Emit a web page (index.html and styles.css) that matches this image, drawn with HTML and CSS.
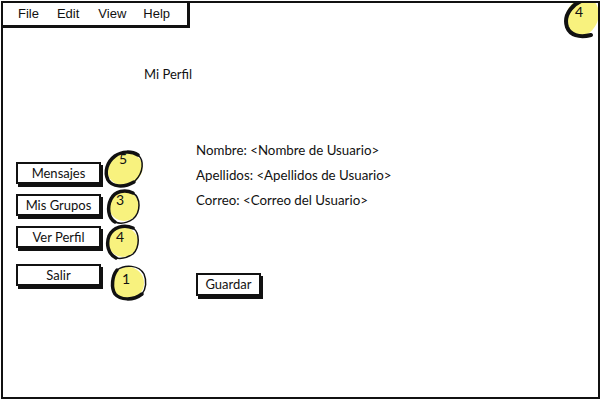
FILE: index.html
```html
<!DOCTYPE html>
<html>
<head>
<meta charset="utf-8">
<link rel="stylesheet" href="styles.css">
</head>
<body>
<div class="frame">
  <div class="menubar">
    <span class="menu-item">File</span>
    <span class="menu-item">Edit</span>
    <span class="menu-item">View</span>
    <span class="menu-item">Help</span>
  </div>
  <div class="corner-badge">
    <svg class="badge-svg" viewBox="0 0 40 44" width="40" height="44">
      <ellipse cx="21" cy="20" rx="16" ry="20" fill="#f8f27e" transform="rotate(25 21 20)"/>
      <path d="M28 2 C12 4 2 18 6 30 C9 38 18 41 30 38" fill="none" stroke="#111" stroke-width="4" stroke-linecap="round"/>
    </svg>
    <span class="badge-num">4</span>
  </div>
  <h1 class="title">Mi Perfil</h1>
  <div class="main">
    <div class="nav">
      <div class="nav-row">
        <div class="btn btn-nav">Mensajes</div>
        <div class="badge b5">
          <svg class="badge-svg" viewBox="0 0 44 40" width="44" height="40">
            <ellipse cx="23" cy="19" rx="18" ry="16" fill="#f8f27e" transform="rotate(-25 23 19)"/>
            <path d="M36 5 C30 1 20 1 13 6 C5 12 2 22 6 30 C10 37 22 38 32 32" fill="none" stroke="#111" stroke-width="3.5" stroke-linecap="round"/>
            <path d="M36 5 C42 10 42 22 33 31" fill="none" stroke="#111" stroke-width="1.5"/>
          </svg>
          <span class="badge-num">5</span>
        </div>
      </div>
      <div class="nav-row">
        <div class="btn btn-nav">Mis Grupos</div>
        <div class="badge b3">
          <svg class="badge-svg" viewBox="0 0 36 38" width="36" height="38">
            <ellipse cx="19" cy="18" rx="15" ry="15" fill="#f8f27e"/>
            <path d="M28 5 C20 1 10 3 6 11 C2 19 3 30 10 34" fill="none" stroke="#111" stroke-width="3.5" stroke-linecap="round"/>
            <path d="M28 5 C36 10 36 24 28 31 C22 35 15 36 10 34" fill="none" stroke="#111" stroke-width="1.5"/>
          </svg>
          <span class="badge-num">3</span>
        </div>
      </div>
      <div class="nav-row">
        <div class="btn btn-nav">Ver Perfil</div>
        <div class="badge b4">
          <svg class="badge-svg" viewBox="0 0 36 38" width="36" height="38">
            <ellipse cx="19" cy="19" rx="15" ry="15" fill="#f8f27e"/>
            <path d="M29 5 C20 1 9 4 5 13 C2 21 4 31 12 35" fill="none" stroke="#111" stroke-width="3.5" stroke-linecap="round"/>
            <path d="M29 5 C36 10 36 24 29 31 C23 35 17 36 12 35" fill="none" stroke="#111" stroke-width="1.5"/>
          </svg>
          <span class="badge-num">4</span>
        </div>
      </div>
      <div class="nav-row">
        <div class="btn btn-nav">Salir</div>
        <div class="badge b1">
          <svg class="badge-svg" viewBox="0 0 40 38" width="40" height="38">
            <ellipse cx="19" cy="19" rx="16" ry="16" fill="#f8f27e"/>
            <path d="M8 6 C3 12 2 24 6 30 C11 36 24 37 33 30" fill="none" stroke="#111" stroke-width="3.5" stroke-linecap="round"/>
            <path d="M8 6 C16 0 30 1 35 10 C38 17 37 25 33 30" fill="none" stroke="#111" stroke-width="1.5"/>
          </svg>
          <span class="badge-num">1</span>
        </div>
      </div>
    </div>
    <div class="profile">
      <p class="field">Nombre: &lt;Nombre de Usuario&gt;</p>
      <p class="field">Apellidos: &lt;Apellidos de Usuario&gt;</p>
      <p class="field">Correo: &lt;Correo del Usuario&gt;</p>
      <div class="btn btn-save">Guardar</div>
    </div>
  </div>
</div>
</body>
</html>
```

FILE: styles.css
```css
* { box-sizing: border-box; }
body {
  margin: 0;
  background: #fff;
  font-family: Lato, "Open Sans", sans-serif;
  color: #111;
}
.frame {
  position: relative;
  width: 599px;
  height: 398px;
  margin: 1px 0 0 1px;
  border: 2px solid #111;
  overflow: hidden;
}
.menubar {
  display: flex;
  align-items: center;
  width: 189px;
  height: 27px;
  margin: -3px 0 0 -3px;
  padding-left: 16px;
  background: #fff;
  border: 2px solid #111;
  box-shadow: 1px 1px 0 #111;
  font-family: "Liberation Sans", Arial, sans-serif;
  font-size: 13px;
  position: relative;
  z-index: 2;
}
.menu-item { margin-right: 18px; }
.menu-item:nth-child(2) { margin-right: 19px; }
.menu-item:nth-child(3) { margin-right: 17px; }
.corner-badge {
  position: absolute;
  right: -3px;
  top: -6px;
  width: 40px;
  height: 44px;
}
.corner-badge .badge-num {
  left: 14px;
  top: 8px;
}
.badge-svg { display: block; }
.badge-num {
  position: absolute;
  font-size: 14px;
  line-height: 14px;
}
.title {
  margin: 39px 0 0 141px;
  font-size: 13px;
  font-weight: normal;
  line-height: 16px;
}
.main {
  display: grid;
  grid-template-columns: 180px 1fr;
  margin-top: 60px;
  padding-left: 13px;
}
.nav {
  display: flex;
  flex-direction: column;
  gap: 10px;
  padding-top: 20px;
}
.nav-row {
  position: relative;
  height: 22px;
}
.nav-row:last-child { margin-top: 6px; }
.btn {
  border: 2px solid #111;
  box-shadow: 2px 3px 0 #111;
  background: #fff;
  font-size: 13px;
  text-align: center;
  line-height: 18px;
}
.btn-nav {
  width: 85px;
  height: 22px;
}
.badge {
  position: absolute;
}
.b5 { left: 86px; top: -12px; }
.b5 .badge-num { left: 17px; top: 2px; }
.b3 { left: 89px; top: -6px; }
.b3 .badge-num { left: 11px; top: 5px; }
.b4 { left: 88px; top: -3px; }
.b4 .badge-num { left: 12px; top: 7px; }
.b1 { left: 93px; top: 0px; }
.b1 .badge-num { left: 13px; top: 8px; }
.profile {
  display: flex;
  flex-direction: column;
  align-items: flex-start;
}
.field {
  margin: 0 0 9px;
  font-size: 13.3px;
  line-height: 16px;
}
.btn-save {
  width: 65px;
  height: 23px;
  margin-top: 56px;
  line-height: 19px;
}
```
